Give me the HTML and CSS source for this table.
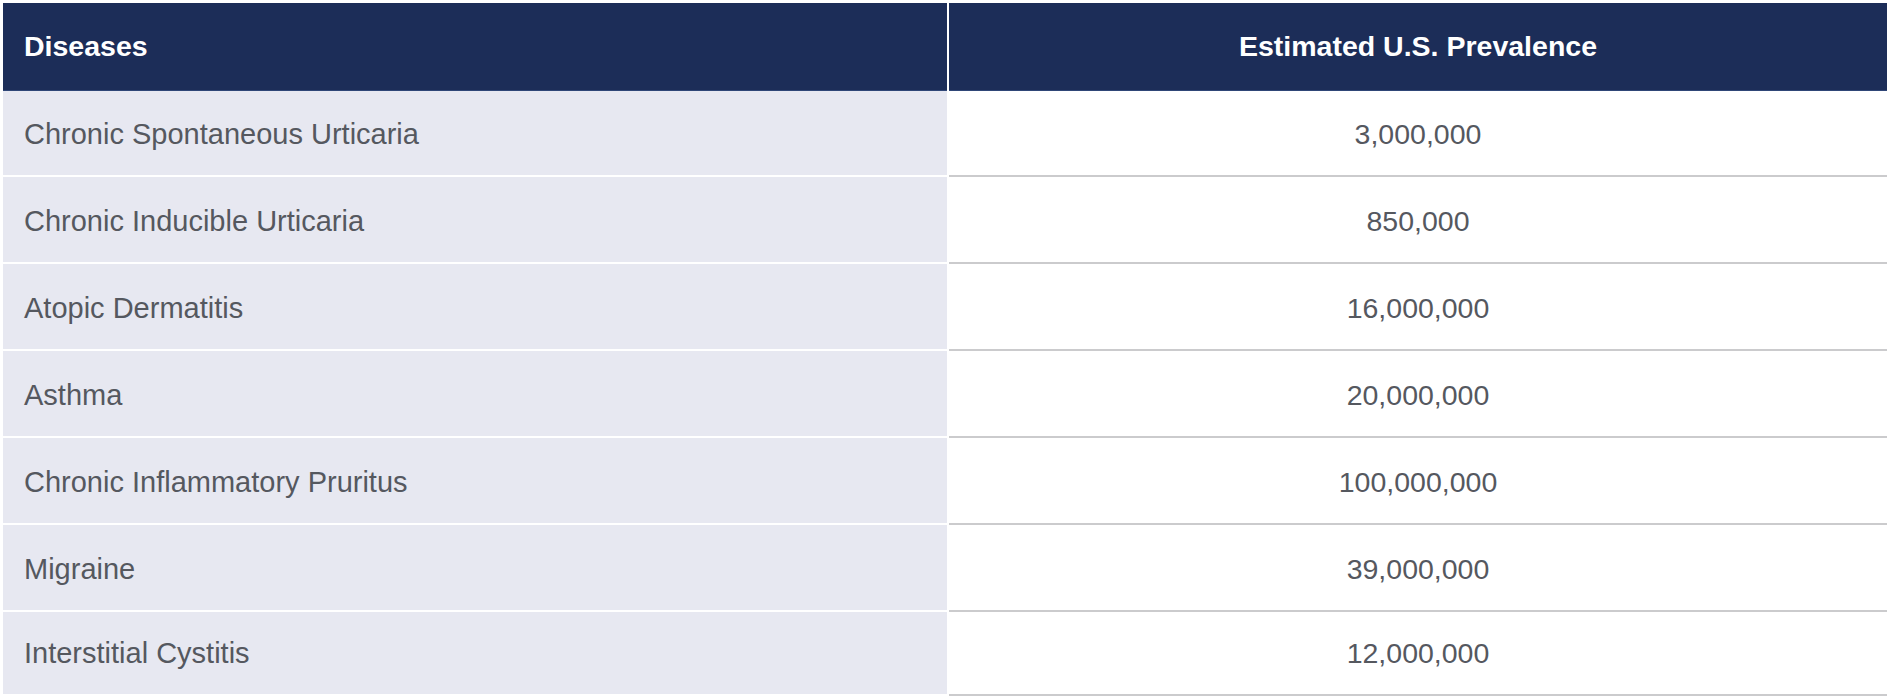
FILE: index.html
```html
<!DOCTYPE html>
<html>
<head>
<meta charset="utf-8">
<link rel="stylesheet" href="styles.css">
</head>
<body>
<div class="table">
  <div class="cell head left">Diseases</div>
  <div class="cell head right">Estimated U.S. Prevalence</div>

  <div class="cell left first">Chronic Spontaneous Urticaria</div>
  <div class="cell right first">3,000,000</div>

  <div class="cell left">Chronic Inducible Urticaria</div>
  <div class="cell right">850,000</div>

  <div class="cell left">Atopic Dermatitis</div>
  <div class="cell right">16,000,000</div>

  <div class="cell left">Asthma</div>
  <div class="cell right">20,000,000</div>

  <div class="cell left">Chronic Inflammatory Pruritus</div>
  <div class="cell right">100,000,000</div>

  <div class="cell left">Migraine</div>
  <div class="cell right">39,000,000</div>

  <div class="cell left last">Interstitial Cystitis</div>
  <div class="cell right last">12,000,000</div>
</div>
</body>
</html>
```

FILE: styles.css
```css
html, body {
  margin: 0;
  padding: 0;
  background: #ffffff;
}

body {
  font-family: "Liberation Sans", Arial, sans-serif;
}

.table {
  display: grid;
  grid-template-columns: 944px 938px;
  column-gap: 2px;
  margin: 3px 0 0 3px;
  width: 1884px;
}

.cell {
  display: flex;
  align-items: center;
  box-sizing: border-box;
  height: 87px;
  padding-top: 3px;
  font-size: 29px;
  color: #55585f;
  border-bottom: 2px solid transparent;
}

.cell.first {
  height: 86px;
}

.cell.last {
  height: 84px;
  padding-top: 1px;
}

.cell.left {
  background: #e7e8f1;
  border-bottom-color: #ffffff;
  padding-left: 21px;
}

.cell.right {
  background: #ffffff;
  justify-content: center;
  border-bottom-color: #cbcbcd;
  font-size: 28.5px;
}

.cell.head {
  height: 88px;
  padding-top: 0;
  background: #1c2d58;
  color: #ffffff;
  font-weight: bold;
  font-size: 28.5px;
  border-bottom: 1px solid #2f4677;
}
```
